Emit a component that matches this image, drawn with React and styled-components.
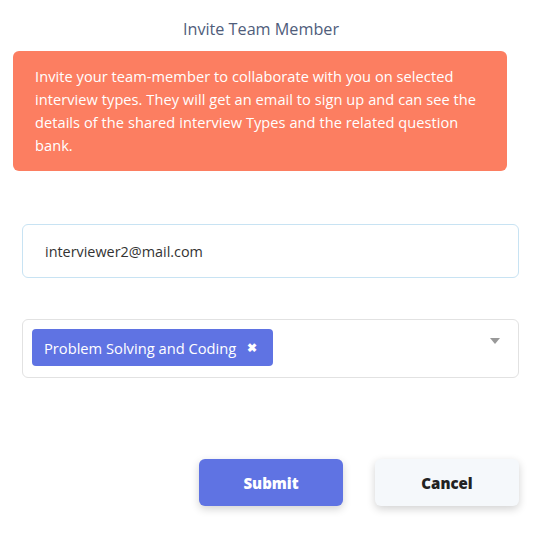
import React from "react";
import styled, { createGlobalStyle } from "styled-components";

const Global = createGlobalStyle`
  html, body { margin: 0; padding: 0; background: #fff; }
  body { font-family: "Open Sans", "Noto Sans", Arial, sans-serif; }
  * { box-sizing: border-box; }
`;

const Page = styled.div`
  width: 544px;
  height: 557px;
  display: flex;
  flex-direction: column;
  padding-top: 18px;
`;

const Title = styled.h2`
  margin: 0;
  font-size: 16.2px;
  line-height: 22px;
  font-weight: 400;
  color: #4f5d7b;
  text-align: center;
  padding-right: 22px;
`;

const Alert = styled.div`
  margin: 11px 37px 0 13px;
  background: #fc7e61;
  border-radius: 6px;
  padding: 14px 20px 14px 22px;
  color: #fff;
  font-size: 14.6px;
  letter-spacing: 0.05px;
  line-height: 23px;
  font-weight: 500;
`;

const Form = styled.form`
  margin: 53px 25px 0 22px;
  display: flex;
  flex-direction: column;
  gap: 41px;
`;

const Input = styled.input`
  height: 54px;
  width: 100%;
  border: 1px solid #c8e3f3;
  border-radius: 6px;
  padding: 0 22px;
  font-family: inherit;
  font-size: 14.4px;
  color: #333;
  outline: none;
`;

const Select = styled.div`
  height: 59px;
  border: 1px solid #e2e2e2;
  border-radius: 6px;
  padding: 9px 18px 9px 9px;
  display: flex;
  align-items: flex-start;
  justify-content: space-between;
`;

const Chip = styled.span`
  height: 37px;
  display: inline-flex;
  align-items: center;
  gap: 11px;
  padding: 0 16px 0 12px;
  background: #5f73e3;
  border-radius: 4px;
  color: #fff;
  font-size: 14.7px;
  font-weight: 500;
`;

const ChipClose = styled.span`
  font-size: 12px;
  font-weight: 700;
  line-height: 1;
`;

const Caret = styled.span`
  margin-top: 9px;
  width: 0;
  height: 0;
  border-left: 5px solid transparent;
  border-right: 5px solid transparent;
  border-top: 6px solid #999;
`;

const Actions = styled.div`
  margin: 81px 25px 0 0;
  display: flex;
  justify-content: flex-end;
  gap: 32px;
`;

const Button = styled.button`
  width: 144px;
  height: 47px;
  border: none;
  border-radius: 6px;
  font-family: inherit;
  font-size: 15px;
  font-weight: 800;
  background: ${(p) => (p.$primary ? "#5f73e3" : "#f5f8fb")};
  color: ${(p) => (p.$primary ? "#fff" : "#222")};
  box-shadow: 0 3px 8px rgba(0, 0, 0, 0.18);
  cursor: pointer;
`;

export default function App() {
  return (
    <>
      <Global />
      <Page>
        <Title>Invite Team Member</Title>
        <Alert>
          Invite your team-member to collaborate with you on selected interview types. They will get an email to sign up and can see the details of the shared interview Types and the related question bank.
        </Alert>
        <Form onSubmit={(e) => e.preventDefault()}>
          <Input defaultValue="interviewer2@mail.com" />
          <Select>
            <Chip>
              Problem Solving and Coding
              <ChipClose>✖</ChipClose>
            </Chip>
            <Caret />
          </Select>
        </Form>
        <Actions>
          <Button $primary>Submit</Button>
          <Button>Cancel</Button>
        </Actions>
      </Page>
    </>
  );
}
